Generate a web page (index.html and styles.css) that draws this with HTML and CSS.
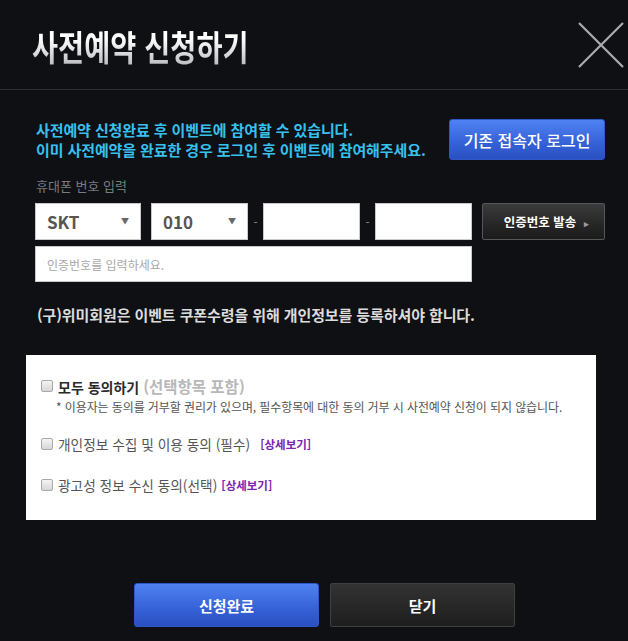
FILE: index.html
```html
<!DOCTYPE html>
<html lang="ko">
<head>
    <meta charset="UTF-8">
    <meta name="viewport" content="width=device-width, initial-scale=1.0">
    <title>사전예약 신청하기</title>
    <link rel="stylesheet" href="styles.css">
</head>
<body>
    <div class="popup">
        <header class="popup-head">
            <h1 class="popup-title">사전예약 신청하기</h1>
            <button class="btn-close" aria-label="닫기">
                <svg width="46" height="46" viewBox="0 0 46 46">
                    <path d="M1 1 L45 45 M45 1 L1 45" stroke="#a9abad" stroke-width="2.2" fill="none"/>
                </svg>
            </button>
        </header>

        <section class="form-area">
            <div class="intro">
                <p class="intro-text">사전예약 신청완료 후 이벤트에 참여할 수 있습니다.<br>이미 사전예약을 완료한 경우 로그인 후 이벤트에 참여해주세요.</p>
                <button class="btn-blue btn-login">기존 접속자 로그인</button>
            </div>

            <div class="field-label">휴대폰 번호 입력</div>
            <div class="phone-row">
                <div class="select sel-carrier">SKT<span class="arrow">▼</span></div>
                <div class="select sel-prefix">010<span class="arrow">▼</span></div>
                <span class="dash">-</span>
                <input class="input input-num" type="text">
                <span class="dash">-</span>
                <input class="input input-num" type="text">
                <button class="btn-dark btn-send">인증번호 발송<span class="caret">▸</span></button>
            </div>
            <div class="code-row">
                <input class="input input-code" type="text" placeholder="인증번호를 입력하세요.">
            </div>

            <p class="notice">(구)위미회원은 이벤트 쿠폰수령을 위해 개인정보를 등록하셔야 합니다.</p>
        </section>

        <section class="agree-box">
            <label class="agree-row agree-all">
                <span class="chk"></span>
                <span><b>모두 동의하기</b> <span class="sub">(선택항목 포함)</span></span>
            </label>
            <p class="agree-note">* 이용자는 동의를 거부할 권리가 있으며, 필수항목에 대한 동의 거부 시 사전예약 신청이 되지 않습니다.</p>
            <label class="agree-row agree-item">
                <span class="chk"></span>
                <span>개인정보 수집 및 이용 동의 (필수)</span>
                <a class="more more-gap">[상세보기]</a>
            </label>
            <label class="agree-row agree-item agree-last">
                <span class="chk"></span>
                <span>광고성 정보 수신 동의(선택)</span>
                <a class="more">[상세보기]</a>
            </label>
        </section>

        <footer class="popup-foot">
            <button class="btn-blue btn-submit">신청완료</button>
            <button class="btn-dark btn-cancel">닫기</button>
        </footer>
    </div>
</body>
</html>
```

FILE: styles.css
```css
body {
    margin: 0;
    background: #0e1014;
    font-family: "Noto Sans CJK KR", "Noto Sans", sans-serif;
    color: #ddd;
}

.popup {
    width: 628px;
    height: 641px;
    overflow: hidden;
}

/* header */
.popup-head {
    height: 89px;
    border-bottom: 1px solid #2a2d32;
    display: flex;
    align-items: center;
    justify-content: space-between;
    padding: 0 4px 0 32px;
}
.popup-title {
    margin: 2px 0 0;
    font-size: 35px;
    font-weight: 700;
    line-height: 40px;
    transform: scaleX(0.81);
    transform-origin: left center;
    white-space: nowrap;
    background: linear-gradient(180deg, #ffffff 30%, #b9bbbe 100%);
    -webkit-background-clip: text;
    background-clip: text;
    color: transparent;
}
.btn-close {
    width: 46px;
    height: 46px;
    padding: 0;
    border: none;
    background: none;
    cursor: pointer;
}
.btn-close svg {
    display: block;
}

/* form */
.form-area {
    padding: 0 23px 0 35px;
}
.intro {
    margin-top: 29px;
    display: flex;
    align-items: center;
    justify-content: space-between;
}
.intro-text {
    margin: 0 0 0 1px;
    color: #38c0ee;
    font-size: 15px;
    font-weight: 700;
    line-height: 20px;
    letter-spacing: -0.1px;
}

.btn-blue {
    border: 1px solid #2e57c9;
    border-radius: 3px;
    background: linear-gradient(180deg, #4f82f2 0%, #3561d6 60%, #2a50c2 100%);
    color: #fff;
    font-family: inherit;
    font-weight: 700;
    cursor: pointer;
}
.btn-dark {
    border: 1px solid #55575a;
    border-radius: 2px;
    background: linear-gradient(180deg, #3b3b3c 0%, #262627 60%, #1b1b1c 100%);
    color: #fff;
    font-family: inherit;
    font-weight: 700;
    cursor: pointer;
}
.btn-login {
    width: 156px;
    height: 41px;
    font-size: 16px;
    font-weight: 500;
}

.field-label {
    margin-top: 18px;
    font-size: 13px;
    line-height: 16px;
    color: #7a7c80;
    padding-left: 1px;
}

.phone-row {
    margin-top: 9px;
    display: flex;
    align-items: center;
    height: 37px;
}
.select {
    height: 37px;
    box-sizing: border-box;
    border: 1px solid #c9c9c9;
    background: #fff;
    display: flex;
    align-items: center;
    justify-content: space-between;
    padding: 0 11px 0 11px;
    font-size: 17px;
    font-weight: 700;
    color: #555;
}
.sel-carrier {
    width: 106px;
    margin-right: 10px;
}
.sel-prefix {
    width: 97px;
}
.arrow {
    font-size: 8px;
    color: #666;
    margin-top: -2px;
}
.dash {
    width: 15px;
    text-align: center;
    color: #888;
    font-size: 12px;
}
.input {
    box-sizing: border-box;
    border: 1px solid #c9c9c9;
    background: #fff;
    outline: none;
    font-family: inherit;
    margin: 0;
}
.input-num {
    width: 97px;
    height: 37px;
}
.btn-send {
    width: 123px;
    height: 37px;
    margin-left: 10px;
    font-size: 12.5px;
    padding: 0 0 0 6px;
}
.caret {
    font-size: 9px;
    color: #9a9a9a;
    margin-left: 8px;
}

.code-row {
    margin-top: 6px;
}
.input-code {
    width: 437px;
    height: 36px;
    padding: 0 11px;
    font-size: 12px;
    color: #555;
}
.input-code::placeholder {
    color: #a8a8a8;
}

.notice {
    margin: 23px 0 0 2px;
    font-size: 15px;
    font-weight: 700;
    line-height: 20px;
    color: #dcdcdc;
    letter-spacing: -0.1px;
}

/* agreements */
.agree-box {
    margin: 30px 32px 0 26px;
    height: 165px;
    box-sizing: border-box;
    background: #fff;
    padding: 21px 15px 0;
}
.agree-row {
    display: flex;
    align-items: center;
    height: 20px;
    white-space: nowrap;
}
.chk {
    width: 10px;
    height: 10px;
    border: 1px solid #a9a9a9;
    border-radius: 2px;
    background: linear-gradient(180deg, #f4f4f4 0%, #d6d6d6 100%);
    margin-right: 5px;
    flex-shrink: 0;
}
.agree-all {
    font-size: 14px;
    color: #2a2a2a;
}
.agree-all b {
    font-weight: 700;
}
.agree-all .sub {
    color: #b8b8b8;
    font-weight: 700;
    font-size: 15.5px;
}
.agree-note {
    margin: 3px 0 0 15px;
    font-size: 12px;
    line-height: 16px;
    color: #555;
    letter-spacing: -0.1px;
    white-space: nowrap;
}
.agree-item {
    margin-top: 19px;
    font-size: 13.7px;
    color: #555;
}
.agree-last {
    margin-top: 21px;
}
.more {
    color: #7b22b3;
    font-size: 11.5px;
    font-weight: 700;
    margin-left: 4px;
}
.more-gap {
    margin-left: 10px;
}

/* footer */
.popup-foot {
    margin-top: 63px;
    padding-left: 134px;
    display: flex;
    gap: 11px;
}
.btn-submit,
.btn-cancel {
    width: 185px;
    height: 44px;
    font-size: 15px;
}
.btn-cancel {
    border-color: #3f4042;
    background: linear-gradient(180deg, #333334 0%, #262627 60%, #1e1e1f 100%);
}
```
